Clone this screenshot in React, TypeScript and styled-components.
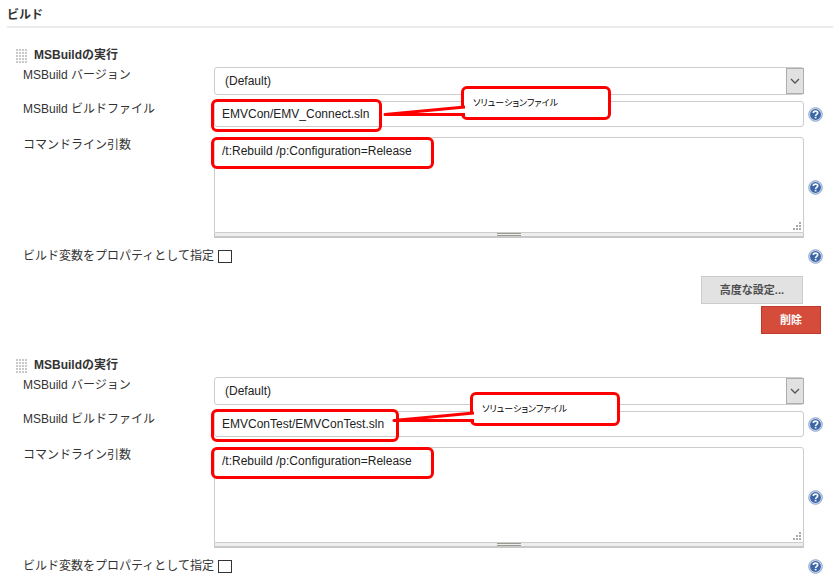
import React, { useId } from "react";
import styled, { createGlobalStyle } from "styled-components";

const GlobalStyle = createGlobalStyle`
  *, *::before, *::after { box-sizing: border-box; }
  body {
    margin: 0;
    background: #fff;
    color: #333;
    font: 12px/16px "Liberation Sans", "Noto Sans CJK JP", sans-serif;
  }
  button, input, select, textarea { font: inherit; color: inherit; margin: 0; }
`;

const Page = styled.main`
  padding: 6px 6px 0 7px;
`;

const PageTitle = styled.h1`
  margin: 0 0 18px;
  padding-bottom: 2px;
  border-bottom: 2px solid #ececec;
  font-size: 12px;
  line-height: 18px;
  font-weight: bold;
`;

const Step = styled.section`
  padding: 0 10px 0 9px;
  margin-bottom: 22px;
`;

const StepHeader = styled.header`
  display: flex;
  align-items: center;
  gap: 7px;
  margin-bottom: 3px;
`;

const StepTitle = styled.h2`
  margin: 0;
  font-size: 12px;
  line-height: 18px;
  font-weight: bold;
`;

const DragHandle = styled.span`
  width: 11px;
  height: 14px;
  margin-top: 2px;
  background-color: #c8c8c8;
  background-image:
    linear-gradient(90deg, transparent 2px, #fff 2px),
    linear-gradient(transparent 2px, #fff 2px);
  background-size: 3px 3px;
`;

const Row = styled.div<{ $gap?: number }>`
  display: grid;
  grid-template-columns: 191px minmax(0, 1fr) 19px;
  padding-left: 7px;
  margin-bottom: ${(p) => p.$gap ?? 0}px;
`;

const Label = styled.label`
  white-space: nowrap;
`;

const Field = styled.div`
  position: relative;
`;

const HelpButton = styled.button`
  display: flex;
  align-self: center;
  justify-self: end;
  padding: 0;
  border: 0;
  background: none;
`;

const Select = styled.select`
  display: block;
  appearance: none;
  width: 100%;
  height: 28px;
  padding: 0 28px 0 10px;
  border: 1px solid #ccc;
  border-radius: 3px;
  background: #fff;
  color: #222;
`;

const SelectArrow = styled.span`
  position: absolute;
  top: 1px;
  right: 0;
  bottom: 1px;
  width: 18px;
  display: flex;
  align-items: center;
  justify-content: center;
  border: 1px solid #adadad;
  background: #e1e1e1;
  pointer-events: none;
`;

const TextInput = styled.input`
  display: block;
  width: 100%;
  height: 26px;
  padding: 0 7px;
  border: 1px solid #ccc;
  border-radius: 3px;
  color: #222;
`;

const TextArea = styled.textarea`
  display: block;
  width: 100%;
  height: 96px;
  padding: 5px 7px;
  border: 1px solid #ccc;
  border-radius: 3px 3px 0 0;
  resize: none;
  color: #222;
`;

const Grip = styled.svg`
  position: absolute;
  right: 3px;
  bottom: 8px;
`;

const ResizeBar = styled.div`
  display: flex;
  align-items: center;
  justify-content: center;
  height: 5px;
  border: 1px solid #c8c8c8;
  border-top: 0;
  border-bottom-width: 2px;
  background: #eee;

  &::after {
    content: "";
    width: 24px;
    height: 3px;
    border: solid #999b90;
    border-width: 1px 0;
  }
`;

const Checkbox = styled.input`
  appearance: none;
  display: block;
  width: 14px;
  height: 13px;
  margin: 2px 0 1px 4px;
  border: 1px solid #333;
  background: #fff;

  &:checked { background: #333; }
`;

const Actions = styled.div<{ $inset: number }>`
  display: flex;
  justify-content: flex-end;
  padding-right: ${(p) => p.$inset}px;
  margin-bottom: 2px;
`;

const ActionButton = styled.button<{ $danger?: boolean }>`
  height: 28px;
  padding: 0 18px;
  border: 1px solid ${(p) => (p.$danger ? "#c0392b" : "#ccc")};
  background: ${(p) => (p.$danger ? "#d54c3b" : "#e2e2e2")};
  color: ${(p) => (p.$danger ? "#fff" : "#4d4d4d")};
  font-size: 11px;
  font-weight: bold;
`;

const Highlight = styled.span<{ $top: number; $width: number; $height: number }>`
  position: absolute;
  left: -3px;
  top: ${(p) => p.$top}px;
  width: ${(p) => p.$width}px;
  height: ${(p) => p.$height}px;
  border: 3px solid #f00;
  border-radius: 6px;
  pointer-events: none;
`;

const Callout = styled.div<{ $left: number; $top: number }>`
  position: absolute;
  z-index: 1;
  left: ${(p) => p.$left}px;
  top: ${(p) => p.$top}px;
  width: 150px;
  height: 34px;
  padding: 6px 9px;
  border: 3px solid #f00;
  border-radius: 6px;
  background: #fff;
  color: #000;
  font-family: "Noto Sans CJK JP", sans-serif;
  font-size: 9px;
  font-feature-settings: "palt";
  white-space: nowrap;
`;

const CalloutTail = styled.svg`
  position: absolute;
  right: 100%;
  top: 14px;
  margin-right: -1px;
`;

function HelpIcon() {
  return (
    <svg width="15" height="15" viewBox="0 0 15 15" aria-hidden="true">
      <circle cx="7.5" cy="7.5" r="6.8" fill="#c9d7ea" stroke="#8fa9ce" />
      <circle cx="7.5" cy="7.5" r="5.4" fill="#3c66a5" />
      <path
        d="M5.3 6C5.3 3.5 9.7 3.4 9.7 5.8C9.7 7.3 7.6 7.4 7.6 9"
        fill="none"
        stroke="#f3f7fc"
        strokeWidth="1.7"
      />
      <rect x="6.7" y="9.8" width="1.8" height="1.6" fill="#f3f7fc" />
    </svg>
  );
}

function Help({ topic }: { topic: string }) {
  return (
    <HelpButton type="button" aria-label={`ヘルプ: ${topic}`}>
      <HelpIcon />
    </HelpButton>
  );
}

type BuildStepProps = {
  buildFile: string;
  highlightWidth: number;
  calloutLeft: number;
  calloutTop: number;
  children?: React.ReactNode;
};

function BuildStep({ buildFile, highlightWidth, calloutLeft, calloutTop, children }: BuildStepProps) {
  const id = useId();
  return (
    <Step>
      <StepHeader>
        <DragHandle />
        <StepTitle>MSBuildの実行</StepTitle>
      </StepHeader>
      <Row $gap={6}>
        <Label htmlFor={`${id}version`}>MSBuild バージョン</Label>
        <Field>
          <Select id={`${id}version`}>
            <option>(Default)</option>
          </Select>
          <SelectArrow>
            <svg width="10" height="6" viewBox="0 0 10 6" aria-hidden="true">
              <path d="M1 1L5 5L9 1" fill="none" stroke="#555" strokeWidth="1.3" />
            </svg>
          </SelectArrow>
        </Field>
      </Row>
      <Row $gap={10}>
        <Label htmlFor={`${id}file`}>MSBuild ビルドファイル</Label>
        <Field>
          <TextInput id={`${id}file`} type="text" defaultValue={buildFile} />
          <Highlight $top={-2} $width={highlightWidth} $height={33} />
          <Callout $left={calloutLeft} $top={calloutTop}>
            <CalloutTail width="83" height="18" viewBox="0 0 83 18" aria-hidden="true">
              <path d="M83 4L3 11.5L83 11.5Z" fill="#fff" />
              <path d="M83 4L3 11.5L83 11.5" fill="none" stroke="#f00" strokeWidth="3" strokeLinejoin="round" />
            </CalloutTail>
            ソリューションファイル
          </Callout>
        </Field>
        <Help topic="MSBuild ビルドファイル" />
      </Row>
      <Row $gap={10}>
        <Label htmlFor={`${id}args`}>コマンドライン引数</Label>
        <Field>
          <TextArea id={`${id}args`} defaultValue="/t:Rebuild /p:Configuration=Release" />
          <ResizeBar />
          <Grip width="8" height="8" viewBox="0 0 8 8" fill="#aaa" aria-hidden="true">
            <path d="M6 0h2v2h-2zM3 3h2v2h-2zM6 3h2v2h-2zM0 6h2v2h-2zM3 6h2v2h-2zM6 6h2v2h-2z" />
          </Grip>
          <Highlight $top={0} $width={223} $height={32} />
        </Field>
        <Help topic="コマンドライン引数" />
      </Row>
      <Row $gap={12}>
        <Label htmlFor={`${id}props`}>ビルド変数をプロパティとして指定</Label>
        <Field>
          <Checkbox id={`${id}props`} type="checkbox" />
        </Field>
        <Help topic="ビルド変数をプロパティとして指定" />
      </Row>
      {children}
    </Step>
  );
}

export default function App() {
  return (
    <>
      <GlobalStyle />
      <Page>
        <PageTitle>ビルド</PageTitle>
        <BuildStep buildFile="EMVCon/EMV_Connect.sln" highlightWidth={171} calloutLeft={247} calloutTop={-15}>
          <Actions $inset={20}>
            <ActionButton type="button">高度な設定...</ActionButton>
          </Actions>
          <Actions $inset={2}>
            <ActionButton type="button" $danger>
              削除
            </ActionButton>
          </Actions>
        </BuildStep>
        <BuildStep buildFile="EMVConTest/EMVConTest.sln" highlightWidth={188} calloutLeft={256} calloutTop={-19} />
      </Page>
    </>
  );
}
